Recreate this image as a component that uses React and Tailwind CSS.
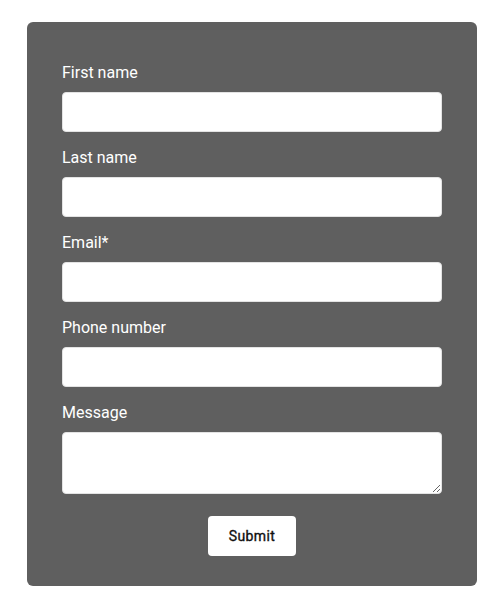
export default function App() {
  const fields = ["First name", "Last name", "Email*", "Phone number"];
  return (
    <div className="w-[502px] h-[600px] bg-white pt-[22px] pl-[27px]" style={{ fontFamily: "Roboto, 'Liberation Sans', sans-serif" }}>
      <div className="w-[450px] h-[564px] bg-[#5f5f5f] rounded-[6px] px-[35px] pt-[41px] flex flex-col">
        {fields.map((f) => (
          <div key={f} className="flex flex-col mb-[16px]">
            <label className="text-white text-[16px] leading-[20px] mb-[9px]">{f}</label>
            <input className="h-[40px] w-[380px] bg-white rounded-[4px] border border-[#e3e3e3] outline-none" />
          </div>
        ))}
        <div className="flex flex-col">
          <label className="text-white text-[16px] leading-[20px] mb-[9px]">Message</label>
          <textarea className="h-[62px] w-[380px] bg-white rounded-[4px] border border-[#e3e3e3] outline-none block" />
        </div>
        <div className="flex justify-center mt-[22px]">
          <button className="w-[88px] h-[40px] bg-white rounded-[4px] text-[14px] font-normal tracking-[0.4px] text-[#111] [-webkit-text-stroke:0.35px_#111]">Submit</button>
        </div>
      </div>
    </div>
  );
}
